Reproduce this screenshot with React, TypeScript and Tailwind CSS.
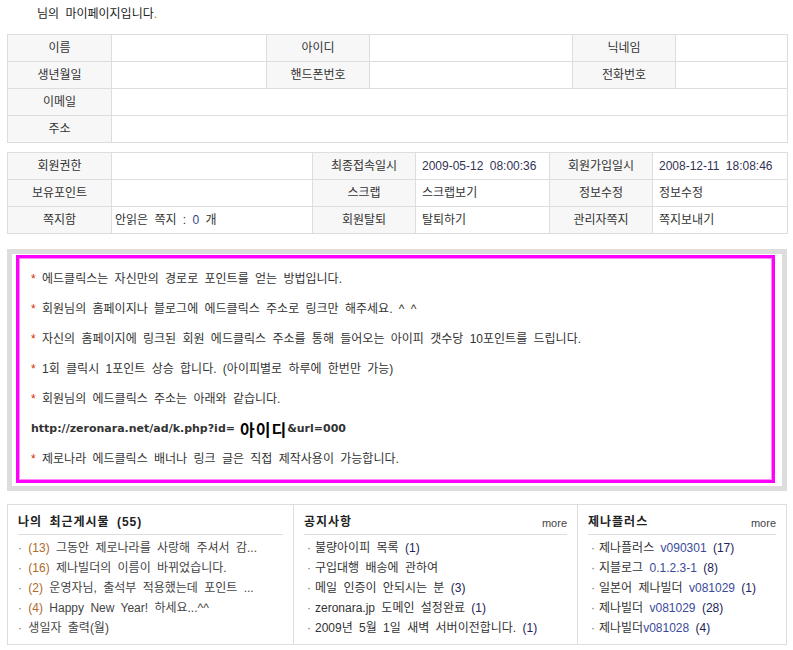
import React from 'react';

const font = "font-['Liberation_Sans','Noto_Sans_CJK_KR',sans-serif] [word-spacing:3px]";

const labelCls = 'border border-[#dddddd] bg-[#f7f7f7] text-center text-[#333333] h-[27px] p-0';
const valueCls = 'border border-[#dddddd] bg-white text-left text-[#333333] h-[27px] py-0 pl-[6px]';

function InfoTable() {
  return (
    <table className="w-[780px] table-fixed border-collapse text-[12px] leading-[16px]">
      <colgroup>
        <col className="w-[104px]" />
        <col className="w-[155px]" />
        <col className="w-[103px]" />
        <col className="w-[203px]" />
        <col className="w-[103px]" />
        <col className="w-[112px]" />
      </colgroup>
      <tbody>
        <tr>
          <td className={labelCls}>이름</td>
          <td className={valueCls}></td>
          <td className={labelCls}>아이디</td>
          <td className={valueCls}></td>
          <td className={labelCls}>닉네임</td>
          <td className={valueCls}></td>
        </tr>
        <tr>
          <td className={labelCls}>생년월일</td>
          <td className={valueCls}></td>
          <td className={labelCls}>핸드폰번호</td>
          <td className={valueCls}></td>
          <td className={labelCls}>전화번호</td>
          <td className={valueCls}></td>
        </tr>
        <tr>
          <td className={labelCls}>이메일</td>
          <td className={valueCls} colSpan={5}></td>
        </tr>
        <tr>
          <td className={labelCls}>주소</td>
          <td className={valueCls} colSpan={5}></td>
        </tr>
      </tbody>
    </table>
  );
}

function MemberTable() {
  return (
    <table className="w-[780px] table-fixed border-collapse text-[12px] leading-[16px]">
      <colgroup>
        <col className="w-[104px]" />
        <col className="w-[201px]" />
        <col className="w-[103px]" />
        <col className="w-[134px]" />
        <col className="w-[103px]" />
        <col className="w-[135px]" />
      </colgroup>
      <tbody>
        <tr>
          <td className={labelCls}>회원권한</td>
          <td className={valueCls}></td>
          <td className={labelCls}>최종접속일시</td>
          <td className={`${valueCls} text-[#333355]`}>2009-05-12 08:00:36</td>
          <td className={labelCls}>회원가입일시</td>
          <td className={`${valueCls} text-[#333355]`}>2008-12-11 18:08:46</td>
        </tr>
        <tr>
          <td className={labelCls}>보유포인트</td>
          <td className={valueCls}></td>
          <td className={labelCls}>스크랩</td>
          <td className={valueCls}>스크랩보기</td>
          <td className={labelCls}>정보수정</td>
          <td className={valueCls}>정보수정</td>
        </tr>
        <tr>
          <td className={labelCls}>쪽지함</td>
          <td className={`${valueCls} !pl-[3px]`}>
            안읽은 쪽지 : <span className="text-[#334488]">0</span> 개
          </td>
          <td className={labelCls}>회원탈퇴</td>
          <td className={valueCls}>탈퇴하기</td>
          <td className={labelCls}>관리자쪽지</td>
          <td className={valueCls}>쪽지보내기</td>
        </tr>
      </tbody>
    </table>
  );
}

const notes = [
  '에드클릭스는 자신만의 경로로 포인트를 얻는 방법입니다.',
  '회원님의 홈페이지나 블로그에 에드클릭스 주소로 링크만 해주세요. ^ ^',
  '자신의 홈페이지에 링크된 회원 에드클릭스 주소를 통해 들어오는 아이피 갯수당 10포인트를 드립니다.',
  '1회 클릭시 1포인트 상승 합니다. (아이피별로 하루에 한번만 가능)',
  '회원님의 에드클릭스 주소는 아래와 같습니다.',
];

function AdClickBox() {
  return (
    <div className="w-[780px] border-[5px] border-[#dddddd] pt-[1px] pr-[7px] pb-[3px] pl-[4px]">
      <div className="border-[3px] border-[#ff00ff] shadow-[inset_0_0_0_1px_#ff88ff] py-[6px] pl-[12px] text-[12px] leading-[30px] text-[#333333]">
        {notes.map((n) => (
          <div key={n} className="h-[30px]">
            <span className="text-[#cc3300]">*</span> {n}
          </div>
        ))}
        <div className="flex h-[30px] items-center font-['DejaVu_Sans','Noto_Sans_CJK_KR',sans-serif] text-[11px] font-bold leading-[16px] text-[#333333] [word-spacing:0px]">
          <span>http://zeronara.net/ad/k.php?id=</span>
          <span className="ml-[5px] font-['Noto_Sans_CJK_KR',sans-serif] text-[16px] leading-[20px] tracking-[1px] text-black">
            아이디
          </span>
          <span>&amp;url=000</span>
        </div>
        <div className="h-[30px]">
          <span className="text-[#cc3300]">*</span> 제로나라 에드클릭스 배너나 링크 글은 직접 제작사용이 가능합니다.
        </div>
      </div>
    </div>
  );
}

type Item = { text: string; count?: string; ver?: string; pre?: string };

function Panel({
  title,
  more,
  items,
  variant,
  className,
}: {
  title: string;
  more?: boolean;
  items: Item[];
  variant: 'recent' | 'list';
  className?: string;
}) {
  return (
    <div className={`px-[10px] pb-[6px] ${className ?? ''}`}>
      <div className="flex items-end justify-between border-b border-[#dddddd] pt-[9px] pb-[4px]">
        <span className="text-[12px] font-bold leading-[16px] tracking-[1px] text-[#222222]">{title}</span>
        {more && <span className="text-[11px] leading-[14px] text-[#444444]">more</span>}
      </div>
      <ul className="mt-[3px] text-[12px] leading-[20px] text-[#444444]">
        {items.map((it) =>
          variant === 'recent' ? (
            <li key={it.text} className="h-[20px] whitespace-nowrap">
              <span className="text-[#777777]">·</span>
              {it.pre ? <span className="text-[#b06a2a]"> {it.pre}</span> : ' '} {it.text}
            </li>
          ) : (
            <li key={it.text} className="flex h-[20px] whitespace-nowrap">
              <span className="w-[11px] pl-[3px] text-[#777777]">·</span>
              <span className="text-[#333333]">
                {it.text}
                {it.ver && <span className="text-[#3a4a99]">{it.ver}</span>}
                {it.count && <span className="text-[#222255]"> {it.count}</span>}
              </span>
            </li>
          ),
        )}
      </ul>
    </div>
  );
}

export default function App() {
  return (
    <div className={`${font} w-[793px] bg-white text-[12px] text-[#333333]`}>
      <div className="h-[34px] pl-[37px] pt-[5px] text-[12px] leading-[18px] text-[#222222]">
        님의 마이페이지입니다<span className="text-[#cc7700]">.</span>
      </div>
      <div className="pl-[7px]">
        <InfoTable />
        <div className="h-[9px]" />
        <MemberTable />
        <div className="h-[15px]" />
        <AdClickBox />
        <div className="h-[13px]" />
        <div className="flex w-[780px] border border-[#dddddd]">
          <Panel
            className="w-[286px] border-r border-[#dddddd]"
            title="나의 최근게시물 (55)"
            variant="recent"
            items={[
              { pre: '(13)', text: '그동안 제로나라를 사랑해 주셔서 감...' },
              { pre: '(16)', text: '제나빌더의 이름이 바뀌었습니다.' },
              { pre: '(2)', text: '운영자님, 출석부 적용했는데 포인트 ...' },
              { pre: '(4)', text: 'Happy New Year! 하세요...^^' },
              { text: '생일자 출력(월)' },
            ]}
          />
          <Panel
            className="w-[284px] border-r border-[#dddddd]"
            title="공지사항"
            more
            variant="list"
            items={[
              { text: '불량아이피 목록', count: '(1)' },
              { text: '구입대행 배송에 관하여' },
              { text: '메일 인증이 안되시는 분', count: '(3)' },
              { text: 'zeronara.jp 도메인 설정완료', count: '(1)' },
              { text: '2009년 5월 1일 새벽 서버이전합니다.', count: '(1)' },
            ]}
          />
          <Panel
            className="flex-1"
            title="제나플러스"
            more
            variant="list"
            items={[
              { text: '제나플러스 ', ver: 'v090301', count: '(17)' },
              { text: '지블로그 ', ver: '0.1.2.3-1', count: '(8)' },
              { text: '일본어 제나빌더 ', ver: 'v081029', count: '(1)' },
              { text: '제나빌더 ', ver: 'v081029', count: '(28)' },
              { text: '제나빌더', ver: 'v081028', count: '(4)' },
            ]}
          />
        </div>
      </div>
    </div>
  );
}
